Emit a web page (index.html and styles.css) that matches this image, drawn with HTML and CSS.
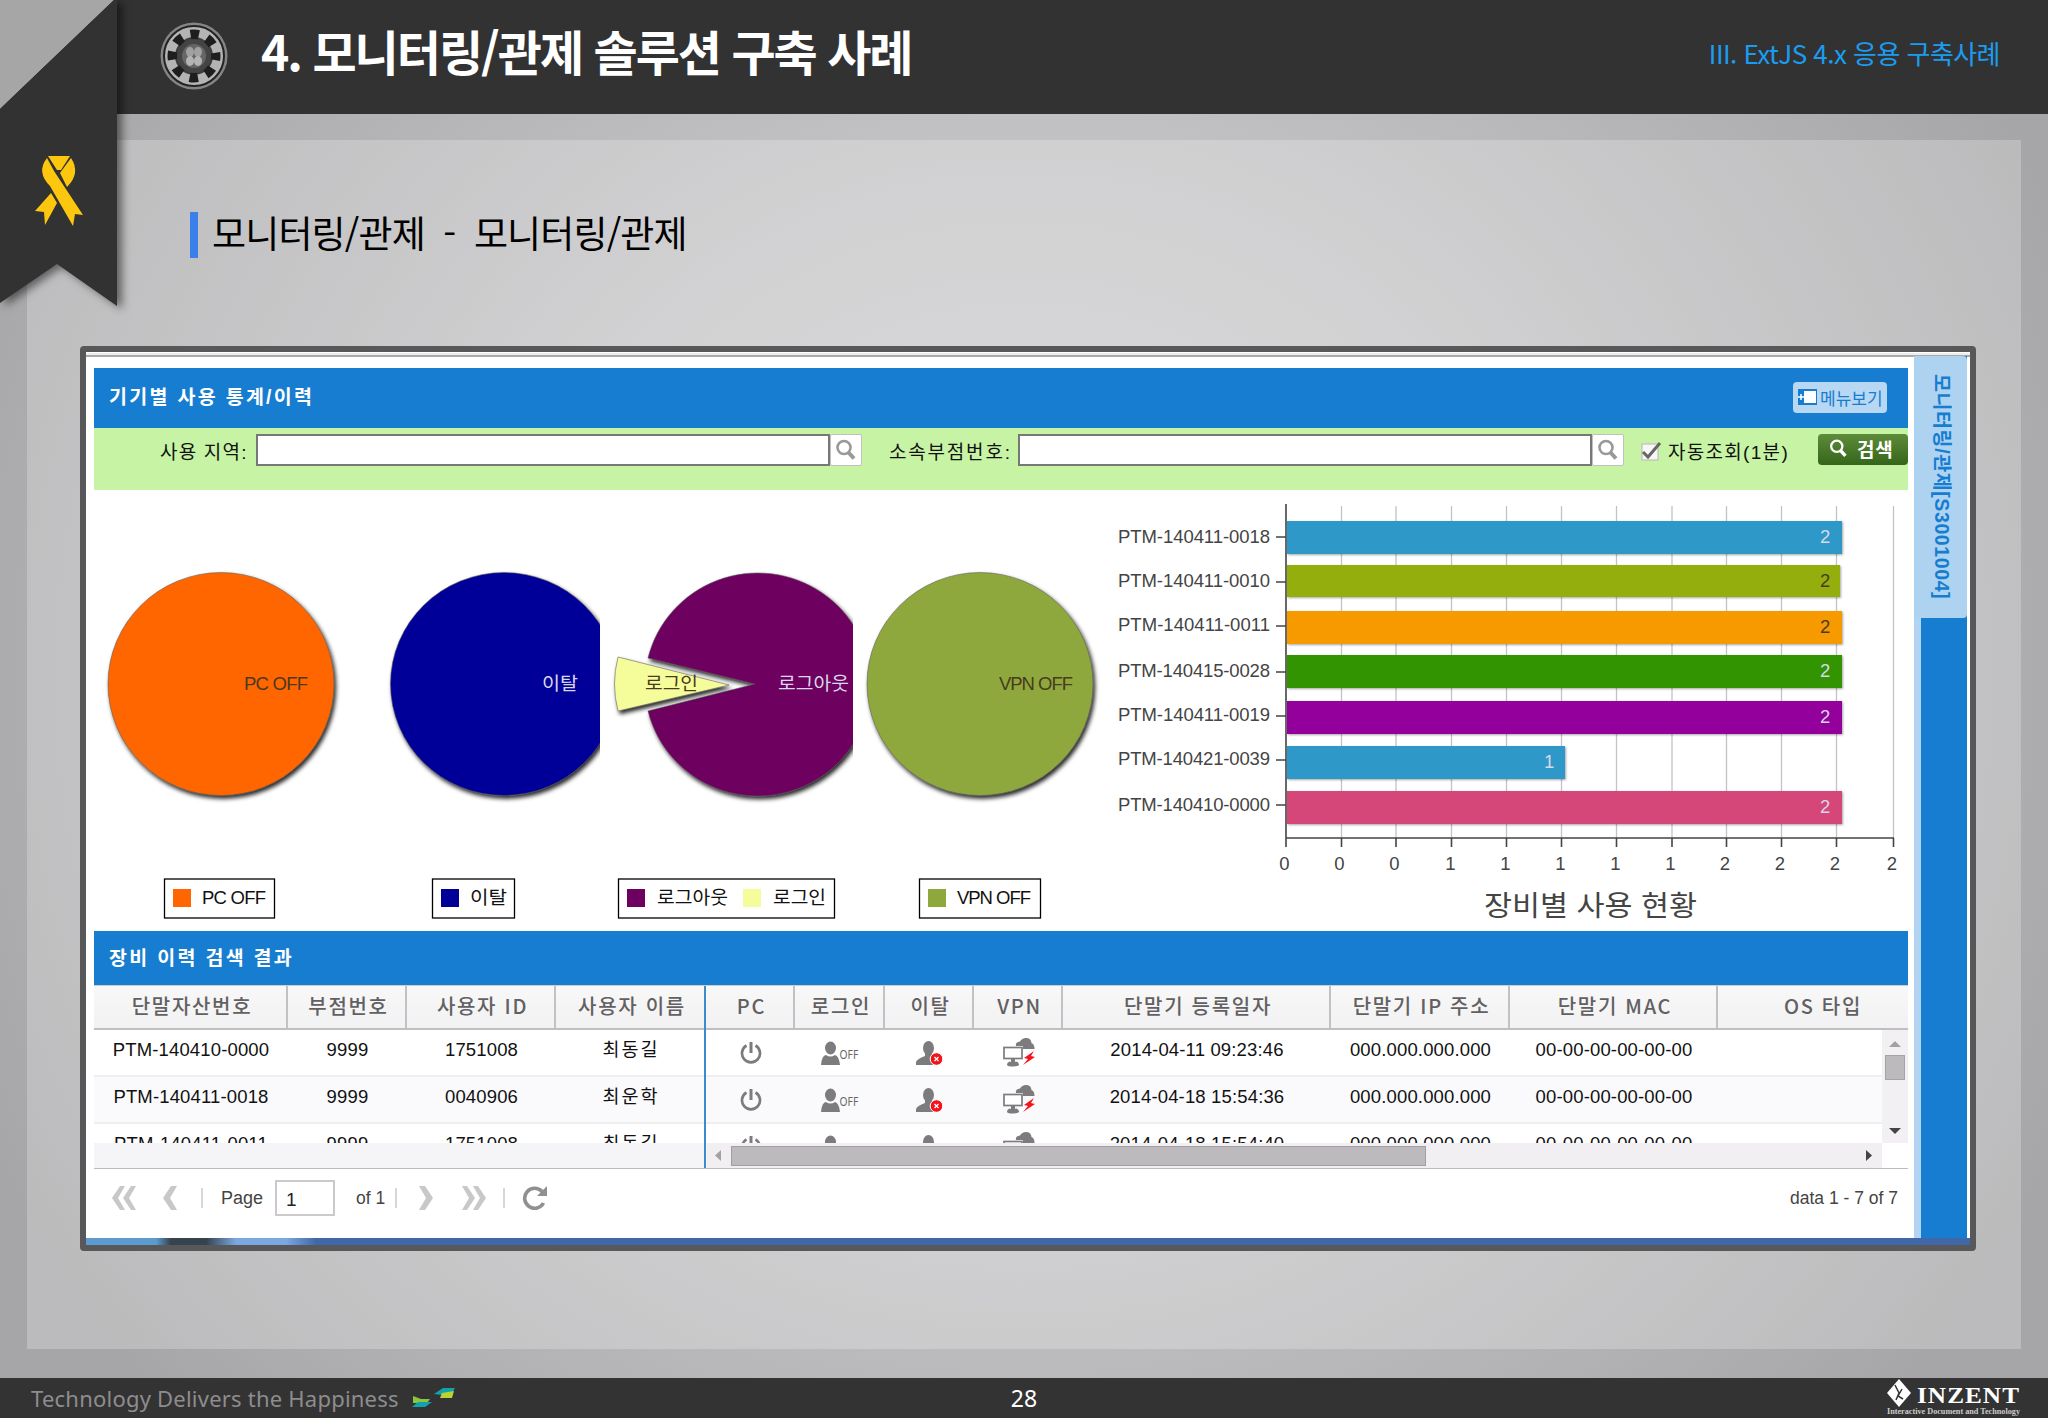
FILE: index.html
```html
<!DOCTYPE html>
<html lang="ko">
<head>
    <meta charset="UTF-8">
    <title>4. 모니터링/관제 솔루션 구축 사례</title>
    <link rel="stylesheet" href="styles.css">
</head>
<body>
    <!-- Shared icons -->
    <svg class="defs" width="0" height="0">
        <defs>
            <filter id="shadow" x="-10%" y="-10%" width="125%" height="125%">
                <feDropShadow dx="2" dy="3" stdDeviation="2.200" flood-color="#000" flood-opacity="0.85"/>
            </filter>
            <filter id="barShadow" x="-2%" y="-10%" width="104%" height="130%">
                <feDropShadow dx="1" dy="1" stdDeviation="1" flood-color="#000" flood-opacity="0.35"/>
            </filter>
            <symbol id="search" viewBox="0 0 22 22">
                <circle cx="9" cy="8.500" r="6.500" fill="none" stroke="currentColor" stroke-width="2.600"/>
                <path d="M13.500 13.500l5.500 6" stroke="currentColor" stroke-width="4"/>
            </symbol>
            <symbol id="power" viewBox="0 0 22 24">
                <path d="M6.500 4.500a9 9 0 1 0 9 0" fill="none" stroke="#7d7b7d" stroke-width="2.700"/>
                <path d="M11 1v11" stroke="#7d7b7d" stroke-width="3"/>
            </symbol>
            <symbol id="user-off" viewBox="0 0 38 24">
                <ellipse cx="9.500" cy="7" rx="5.500" ry="6.500" fill="#7d7b7d"/>
                <path d="M0 24q1-10 5-10q4.500 3 9 0q4 1 5 10z" fill="#7d7b7d"/>
                <text x="18.500" y="17.500" class="off" textLength="19" lengthAdjust="spacingAndGlyphs">OFF</text>
            </symbol>
            <symbol id="user-away" viewBox="0 0 27 24">
                <ellipse cx="12.500" cy="7" rx="5.500" ry="7" fill="#7d7b7d"/>
                <path d="M9 11h7v4l5 3v6H0v-3q1-3 9-6z" fill="#7d7b7d"/>
                <circle cx="20.500" cy="18" r="6.300" fill="#f5131b" stroke="#fff"/>
                <path d="M18.500 16l4 4m0-4l-4 4" stroke="#fff" stroke-width="1.300"/>
            </symbol>
            <symbol id="vpn" viewBox="0 0 32 29">
                <path d="M13 8q-1-4 4-4.500Q19 0 23 0q5 0 5.500 5q3 1 3 6H20V8z" fill="#7d7b7d"/>
                <rect x="1" y="9.500" width="18" height="11" fill="#fff" stroke="#7d7b7d" stroke-width="1.700"/>
                <path d="M10 21v4" stroke="#7d7b7d" stroke-width="4"/>
                <path d="M4 27q0-3 3-3.500q3 2 6 0q3 .500 3 3.500q-1 1.500-6 1.500T4 27z" fill="#7d7b7d"/>
                <path d="M31 13l-10 7 4 1-5 6 12-8-4-1z" fill="#f5131b"/>
            </symbol>
        </defs>
    </svg>

    <header class="slide-header">
        <svg class="emblem" width="70" height="70" viewBox="0 0 70 70">
            <circle cx="35" cy="35" r="33.500" fill="#858585"/>
            <circle cx="35" cy="35" r="30" fill="#b4b4b4" stroke="#222" stroke-width="2"/>
            <circle cx="35" cy="35" r="19" fill="#3c3c3c"/>
            <circle cx="35" cy="35" r="21" fill="none" stroke="#1e1e1e" stroke-width="11" stroke-dasharray="8.250 8.243" stroke-dashoffset="4.100"/>
            <circle cx="35" cy="35" r="17" fill="#444"/>
            <circle cx="35" cy="35" r="12" fill="#666"/>
            <ellipse cx="31" cy="31" rx="4" ry="5" fill="#a0a0a0"/>
            <ellipse cx="39" cy="31" rx="4" ry="5" fill="#a0a0a0"/>
            <ellipse cx="31" cy="40" rx="4" ry="5" fill="#b4b4b4"/>
            <ellipse cx="39" cy="40" rx="4" ry="5" fill="#b4b4b4"/>
        </svg>
        <h1>4. 모니터링/관제 솔루션 구축 사례</h1>
        <span class="chapter">III. ExtJS 4.x 응용 구축사례</span>
    </header>

    <!-- Corner ribbon lies over the header and the panel -->
    <svg class="ribbon" width="135" height="320" viewBox="0 0 135 320">
        <path d="M0 0H114L0 109z" fill="#a6a6a6"/>
        <path d="M114 0h3v306L57 264 0 303V109z" fill="#333233"/>
        <g fill="#fdc70f">
            <path d="M48 156h22l-9 14h-4z"/>
            <path d="M47 158l7 13 29 44-8-1-2 12L50 186q-14-14-3-28z"/>
            <path d="M71 158l-11 15 7 14q14-14 4-29z"/>
            <path d="M51 193l6 10-12 22-1-13-9-1z"/>
        </g>
    </svg>

    <main class="slide">
        <div class="panel">
            <h2>모니터링/관제 <span class="dash">-</span> 모니터링/관제</h2>

            <div class="frame">
                <div class="app">
                    <section class="content">
                        <div class="title-bar">
                            <h3>기기별 사용 통계/이력</h3>
                            <button class="menu-button">
                                <svg width="19" height="16" viewBox="0 0 19 16">
                                    <rect width="19" height="16" fill="#167dd0"/>
                                    <rect x="6" y="2" width="12" height="12" fill="#fff"/>
                                    <path d="M0 8h6M3 5v6" stroke="#fff" stroke-width="1.500"/>
                                </svg>
                                <span>메뉴보기</span>
                            </button>
                        </div>

                        <div class="toolbar">
                            <label class="area-label">사용 지역:</label>
                            <span class="field"></span>
                            <span class="trigger"><svg width="22" height="22"><use href="#search"/></svg></span>
                            <label class="branch-label">소속부점번호:</label>
                            <span class="field"></span>
                            <span class="trigger"><svg width="22" height="22"><use href="#search"/></svg></span>
                            <svg class="check" width="21" height="19" viewBox="0 0 21 19">
                                <rect x="1" y="2" width="16" height="16" fill="#f7f7f7" stroke="#b5b5b5"/>
                                <path d="M2 10l5 5L19 1" fill="none" stroke="#666" stroke-width="3"/>
                            </svg>
                            <label class="auto-label">자동조회(1분)</label>
                            <button class="search-button"><svg width="19" height="19"><use href="#search"/></svg><span>검색</span></button>
                        </div>

                        <div class="charts">
                            <svg width="288" height="441" viewBox="94 490 288 441">
                                <ellipse cx="221" cy="684" rx="113" ry="111.500" fill="#ff6600" class="slice" filter="url(#shadow)"/>
                                <text x="244" y="690" textLength="64" class="dark">PC OFF</text>
                                <rect x="164.500" y="879" width="110" height="39" class="legend"/>
                                <rect x="173" y="889" width="18" height="18" fill="#ff6600"/>
                                <text x="202" y="904" textLength="64">PC OFF</text>
                            </svg>
                            <svg width="218" height="441" viewBox="382 490 218 441">
                                <ellipse cx="504" cy="684" rx="113.500" ry="111.500" fill="#000099" class="slice" filter="url(#shadow)"/>
                                <text x="542" y="690" textLength="36" lengthAdjust="spacingAndGlyphs" class="light">이탈</text>
                                <rect x="432.500" y="879" width="82" height="39" class="legend"/>
                                <rect x="441" y="889" width="18" height="18" fill="#000099"/>
                                <text x="470" y="904" textLength="37" lengthAdjust="spacingAndGlyphs">이탈</text>
                            </svg>
                            <svg width="253" height="441" viewBox="600 490 253 441">
                                <path d="M755 684L648 658A113 111.500 0 1 1 648 711z" fill="#6e0060" class="slice" filter="url(#shadow)"/>
                                <path d="M729 685L618 657Q611 684 618 711z" fill="#f5fd9a" class="slice" filter="url(#shadow)"/>
                                <text x="645" y="690" textLength="53" lengthAdjust="spacingAndGlyphs" class="dark">로그인</text>
                                <text x="778" y="690" textLength="71" lengthAdjust="spacingAndGlyphs" class="light">로그아웃</text>
                                <rect x="618.500" y="879" width="216" height="39" class="legend"/>
                                <rect x="627" y="889" width="18" height="18" fill="#6e0060"/>
                                <text x="657" y="904" textLength="71" lengthAdjust="spacingAndGlyphs">로그아웃</text>
                                <rect x="743" y="889" width="18" height="18" fill="#f5fd9a"/>
                                <text x="773" y="904" textLength="53" lengthAdjust="spacingAndGlyphs">로그인</text>
                            </svg>
                            <svg width="247" height="441" viewBox="853 490 247 441">
                                <ellipse cx="980" cy="684" rx="113" ry="111.500" fill="#8fa83e" class="slice" filter="url(#shadow)"/>
                                <text x="999" y="690" textLength="74" class="dark">VPN OFF</text>
                                <rect x="919.500" y="879" width="121" height="39" class="legend"/>
                                <rect x="928" y="889" width="18" height="18" fill="#8fa83e"/>
                                <text x="957" y="904" textLength="74">VPN OFF</text>
                            </svg>
                            <svg width="808" height="441" viewBox="1100 490 808 441">
                                <path class="gridline" d="M1341.500 506V838M1396 506V838M1451.500 506V838M1506.500 506V838M1561.500 506V838M1616.500 506V838M1672 506V838M1726.500 506V838M1781.500 506V838M1836.500 506V838M1893.500 506V838"/>
                                <g filter="url(#barShadow)">
                                    <rect x="1287" y="521" width="555" height="33" fill="#2f99c9"/>
                                    <rect x="1287" y="565" width="553" height="32" fill="#94ae0a"/>
                                    <rect x="1287" y="611" width="555" height="33" fill="#f79a00"/>
                                    <rect x="1287" y="655" width="555" height="33" fill="#319400"/>
                                    <rect x="1287" y="701" width="555" height="33" fill="#93039c"/>
                                    <rect x="1287" y="746" width="278" height="33" fill="#2f99c9"/>
                                    <rect x="1287" y="791" width="555" height="33" fill="#d54679"/>
                                </g>
                                <path class="axis" d="M1286 504V847M1286 838H1894M1276 537h10M1276 582h10M1276 626h10M1276 672h10M1276 716h10M1276 760h10M1276 805h10M1341.500 838v9M1396 838v9M1451.500 838v9M1506.500 838v9M1561.500 838v9M1616.500 838v9M1672 838v9M1726.500 838v9M1781.500 838v9M1836.500 838v9M1893.500 838v9"/>
                                <g class="names">
                                    <text x="1118" y="543" textLength="152">PTM-140411-0018</text>
                                    <text x="1118" y="587" textLength="152">PTM-140411-0010</text>
                                    <text x="1118" y="631" textLength="152">PTM-140411-0011</text>
                                    <text x="1118" y="677" textLength="152">PTM-140415-0028</text>
                                    <text x="1118" y="721" textLength="152">PTM-140411-0019</text>
                                    <text x="1118" y="765" textLength="152">PTM-140421-0039</text>
                                    <text x="1118" y="811" textLength="152">PTM-140410-0000</text>
                                </g>
                                <g class="values">
                                    <text x="1820" y="543" class="light">2</text>
                                    <text x="1820" y="587" class="dark">2</text>
                                    <text x="1820" y="633" class="dark">2</text>
                                    <text x="1820" y="677" class="light">2</text>
                                    <text x="1820" y="723" class="light">2</text>
                                    <text x="1544" y="768" class="light">1</text>
                                    <text x="1820" y="813" class="light">2</text>
                                </g>
                                <g class="ticks">
                                    <text x="1284.500" y="870">0</text>
                                    <text x="1339.500" y="870">0</text>
                                    <text x="1394.500" y="870">0</text>
                                    <text x="1450.500" y="870">1</text>
                                    <text x="1505.500" y="870">1</text>
                                    <text x="1560.500" y="870">1</text>
                                    <text x="1615.500" y="870">1</text>
                                    <text x="1670.500" y="870">1</text>
                                    <text x="1725" y="870">2</text>
                                    <text x="1780" y="870">2</text>
                                    <text x="1835" y="870">2</text>
                                    <text x="1892" y="870">2</text>
                                </g>
                                <text x="1484" y="916" textLength="213" lengthAdjust="spacingAndGlyphs" class="chart-title">장비별 사용 현황</text>
                            </svg>
                        </div>

                        <div class="title-bar small">
                            <h3>장비 이력 검색 결과</h3>
                        </div>

                        <div class="grid">
                            <div class="row head">
                                <span>단말자산번호</span><span>부점번호</span><span>사용자 ID</span><span>사용자 이름</span>
                                <span>PC</span><span>로그인</span><span>이탈</span><span>VPN</span>
                                <span>단말기 등록일자</span><span>단말기 IP 주소</span><span>단말기 MAC</span><span>OS 타입</span>
                            </div>
                            <div class="body">
                                <div class="rows">
                                    <div class="row">
                                        <span>PTM-140410-0000</span><span>9999</span><span>1751008</span><span class="ko">최동길</span>
                                        <i><svg width="22" height="24"><use href="#power"/></svg></i>
                                        <i><svg width="38" height="24"><use href="#user-off"/></svg></i>
                                        <i><svg width="27" height="24"><use href="#user-away"/></svg></i>
                                        <i><svg width="32" height="29"><use href="#vpn"/></svg></i>
                                        <span>2014-04-11 09:23:46</span><span>000.000.000.000</span><span>00-00-00-00-00-00</span>
                                    </div>
                                    <div class="row">
                                        <span>PTM-140411-0018</span><span>9999</span><span>0040906</span><span class="ko">최운학</span>
                                        <i><svg width="22" height="24"><use href="#power"/></svg></i>
                                        <i><svg width="38" height="24"><use href="#user-off"/></svg></i>
                                        <i><svg width="27" height="24"><use href="#user-away"/></svg></i>
                                        <i><svg width="32" height="29"><use href="#vpn"/></svg></i>
                                        <span>2014-04-18 15:54:36</span><span>000.000.000.000</span><span>00-00-00-00-00-00</span>
                                    </div>
                                    <div class="row">
                                        <span>PTM-140411-0011</span><span>9999</span><span>1751008</span><span class="ko">최동길</span>
                                        <i><svg width="22" height="24"><use href="#power"/></svg></i>
                                        <i><svg width="38" height="24"><use href="#user-off"/></svg></i>
                                        <i><svg width="27" height="24"><use href="#user-away"/></svg></i>
                                        <i><svg width="32" height="29"><use href="#vpn"/></svg></i>
                                        <span>2014-04-18 15:54:40</span><span>000.000.000.000</span><span>00-00-00-00-00-00</span>
                                    </div>
                                </div>
                                <div class="vscroll">
                                    <svg width="12" height="6"><path d="M0 6L6 0l6 6z" fill="#a3a1a3"/></svg>
                                    <b></b>
                                    <svg width="12" height="6"><path d="M0 0h12L6 6z" fill="#444"/></svg>
                                </div>
                            </div>
                            <div class="hscroll">
                                <div class="track">
                                    <svg width="6" height="11"><path d="M6 0v11L0 5.500z" fill="#a3a1a3"/></svg>
                                    <b></b>
                                    <svg width="6" height="11"><path d="M0 0v11l6-5.500z" fill="#444"/></svg>
                                </div>
                            </div>
                            <div class="lock-line"></div>
                        </div>

                        <div class="pager">
                            <svg class="first" width="24" height="24" viewBox="0 0 24 24"><path d="M8 0h5L6 12l7 12H8L0 12zM19 0h5l-7 12 7 12h-5l-8-12z"/></svg>
                            <svg class="prev" width="14" height="24" viewBox="0 0 14 24"><path d="M8 0h6L7 12l7 12H8L0 12z"/></svg>
                            <hr>
                            <span class="page">Page</span>
                            <span class="page-input">1</span>
                            <span class="of">of 1</span>
                            <hr>
                            <svg class="next" width="14" height="24" viewBox="0 0 14 24"><path d="M6 0l8 12-8 12H0l7-12L0 0z"/></svg>
                            <svg class="last" width="24" height="24" viewBox="0 0 24 24"><path d="M5 0l8 12L5 24H0l7-12L0 0zM16 0l8 12-8 12h-5l7-12-7-12z"/></svg>
                            <hr>
                            <svg class="refresh" width="26" height="24" viewBox="0 0 26 24">
                                <path d="M20 5.500A10 10 0 1 0 21.500 17" fill="none" stroke="#918f91" stroke-width="3.600"/>
                                <path d="M25 0v10H15z" fill="#918f91"/>
                            </svg>
                            <span class="total">data 1 - 7 of 7</span>
                        </div>
                    </section>

                    <aside class="side">
                        <div class="tab"><span>모니터링/관제[S3001004]</span></div>
                    </aside>
                </div>
                <div class="taskbar"></div>
            </div>
        </div>
    </main>

    <footer>
        <span class="slogan">Technology Delivers the Happiness</span>
        <svg class="mark" width="44" height="22" viewBox="0 0 44 22">
            <path d="M1 9l8 3h9l-3 4H1z" fill="#8cc63f"/>
            <path d="M0 20l6-5h14l-7 5z" fill="#12a2ae"/>
            <path d="M22 7l9-6h12l-3 5-10 2z" fill="#12a2ae"/>
            <path d="M30 6l12-2-2 7H28z" fill="#b8d433"/>
        </svg>
        <span class="number">28</span>
        <svg class="logo" width="136" height="38" viewBox="0 0 136 38">
            <path d="M13 0l12 14-12 14L1 14z" fill="#fff"/>
            <path d="M9 6l4 8-3 7M16 10l-4 7 5 3" stroke="#343334" stroke-width="1.500" fill="none"/>
            <text x="31" y="24" textLength="103" lengthAdjust="spacingAndGlyphs" class="brand">INZENT</text>
            <text x="1" y="35" textLength="133" lengthAdjust="spacingAndGlyphs" class="tagline">Interactive Document and Technology</text>
        </svg>
    </footer>
</body>
</html>
```
FILE: styles.css
```css
* {
    box-sizing: border-box;
}
body {
    margin: 0;
    width: 2048px;
    height: 1418px;
    overflow: hidden;
    display: flex;
    flex-direction: column;
    position: relative;
    font-family: "Liberation Sans", "Noto Sans CJK KR", sans-serif;
    background: radial-gradient(ellipse 1150px 1100px at 50% 48%, #d2d2d4 0%, #c4c3c5 45%, #a6a5a7 100%);
}
h1, h2, h3 {
    margin: 0;
    white-space: nowrap;
}
svg {
    display: block;
    flex: none;
}
.defs {
    position: absolute;
}

/* Slide header */
.slide-header {
    height: 114px;
    flex: none;
    display: flex;
    align-items: center;
    padding: 0 48px 2px 159px;
    background: #333233;
}
.slide-header h1 {
    margin-left: 32px;
    padding-bottom: 12px;
    color: #fff;
    font: bold 48px/70px "Noto Sans CJK KR", sans-serif;
    letter-spacing: -2px;
}
.chapter {
    margin-left: auto;
    padding-bottom: 6px;
    color: #1a9df0;
    font: 400 26px/40px "Noto Sans CJK KR", sans-serif;
    letter-spacing: -0.55px;
}
.ribbon {
    position: absolute;
    left: 0;
    top: 0;
    filter: drop-shadow(5px 3px 4px rgba(0, 0, 0, 0.5));
}

/* Slide body */
.slide {
    height: 1264px;
    flex: none;
    padding: 26px 27px 29px;
}
.panel {
    height: 1209px;
    padding: 72px 46px 0 53px;
    background: rgba(255, 255, 255, 0.24);
}
.panel h2 {
    height: 46px;
    margin-left: 110px;
    padding-left: 14px;
    border-left: 8px solid #3b80ea;
    color: #000;
    font: 400 37px/41px "Noto Sans CJK KR", sans-serif;
    letter-spacing: -0.85px;
}
.dash {
    margin: 0 9px;
}
.frame {
    width: 1896px;
    height: 905px;
    margin-top: 88px;
    border: 6px solid #58585a;
    border-radius: 4px;
    background: #fff;
}
.app {
    height: 886px;
    display: flex;
    border-top: 1px solid #fff;
    padding-left: 8px;
    padding-right: 2px;
    background: linear-gradient(#eee 0, #eee 2px, #aaa 2px, #aaa 4px, #fff 4px);
}
.content {
    width: 1814px;
    padding-top: 15px;
}
.taskbar {
    height: 7px;
    background: linear-gradient(90deg, #5b9bd0 0, #5b9bd0 70px, #36424c 85px, #36424c 120px, #7ba8e0 150px, #7ba8e0 200px, #4068a8 230px, #4068a8 100%);
}

.title-bar {
    height: 60px;
    display: flex;
    align-items: center;
    justify-content: space-between;
    padding: 0 21px 2px 15px;
    background: #167dd0;
}
.title-bar h3 {
    padding-bottom: 3px;
    color: #fff;
    font-size: 19.5px;
    font-weight: bold;
    letter-spacing: 2.3px;
}
.title-bar.small {
    height: 54px;
    padding-bottom: 0;
}
.menu-button {
    width: 94px;
    height: 31px;
    display: flex;
    align-items: center;
    gap: 3px;
    padding: 0 0 0 5px;
    border: 0;
    border-radius: 4px;
    background: #b7d7f2;
    color: #167dd0;
    font: 17px "Noto Sans CJK KR", sans-serif;
    white-space: nowrap;
}

/* Search toolbar */
.toolbar {
    height: 62px;
    display: flex;
    align-items: flex-start;
    padding-top: 6px;
    background: #c7f4a4;
    color: #111;
    font-size: 19px;
    line-height: 37px;
}
.toolbar label {
    flex: none;
    white-space: nowrap;
}
.area-label {
    width: 96px;
    margin-left: 66px;
    letter-spacing: 1.2px;
}
.branch-label {
    width: 129px;
    margin-left: 27px;
    letter-spacing: 1.8px;
}
.auto-label {
    width: 150px;
    letter-spacing: 1.3px;
}
.field {
    width: 574px;
    height: 32px;
    flex: none;
    border: 2px solid #777;
    background: #fff;
}
.trigger {
    width: 32px;
    height: 32px;
    flex: none;
    display: flex;
    align-items: center;
    justify-content: center;
    border: 1px solid #c0c0c0;
    border-radius: 2px;
    background: #fff;
    color: #999;
}
.check {
    margin: 8px 6px 0 17px;
}
.search-button {
    width: 90px;
    height: 31px;
    display: flex;
    align-items: center;
    gap: 9px;
    padding: 0 0 2px 11px;
    border: 0;
    border-radius: 4px;
    background: linear-gradient(#5d8c3a, #35651a);
    color: #fff;
    font: bold 19px "Noto Sans CJK KR", sans-serif;
    letter-spacing: 0.8px;
    white-space: nowrap;
}

/* Charts */
.charts {
    height: 441px;
    display: flex;
}
.charts text {
    font-size: 18.5px;
    fill: #111;
}
.charts .dark {
    fill: #4a3a20;
}
.charts .light {
    fill: #d8d8e8;
}
.slice {
    stroke: rgba(90, 90, 90, 0.55);
    stroke-width: 1;
}
.legend {
    fill: #fff;
    stroke: #000;
    stroke-width: 1.3;
}
.gridline {
    fill: none;
    stroke: #c3c2c8;
    stroke-width: 1.3;
}
.axis {
    fill: none;
    stroke: #444;
    stroke-width: 1.6;
}
.names text, .ticks text {
    fill: #444;
}
.ticks text {
    text-anchor: middle;
}
.charts .chart-title {
    font-size: 28px;
    fill: #444;
}

/* Result grid */
.grid {
    position: relative;
    width: 1814px;
    height: 184px;
    border-bottom: 1px solid #bdbbbd;
}
.row {
    display: grid;
    grid-template-columns: 194px 119px 149px 150px 89px 90px 89px 89px 268px 179px 208px 208px;
    height: 47px;
    border-bottom: 2px solid #eeedf0;
    font-size: 18.5px;
    line-height: 40px;
    letter-spacing: 0.15px;
    text-align: center;
    white-space: nowrap;
}
.row:nth-child(even) {
    background: #fafafc;
}
.row i {
    display: flex;
    align-items: center;
    justify-content: center;
}
.row .ko {
    letter-spacing: 2px;
}
.head {
    height: 45px;
    overflow: hidden;
    border-top: 1px solid #ccc;
    border-bottom: 2px solid #c0bec0;
    background: linear-gradient(#f8f8f8, #f2f1f3);
    color: #626062;
    font: 500 20px/40px "Noto Sans CJK KR", sans-serif;
    letter-spacing: 1.7px;
}
.head span {
    padding-left: 4px;
    border-right: 2px solid #c3c1c3;
}
.off {
    font: 12px "Noto Sans", sans-serif;
    fill: #666;
}
.body {
    display: flex;
    height: 113px;
    overflow: hidden;
    color: #111;
}
.rows {
    width: 1788px;
    overflow: hidden;
}
.vscroll {
    width: 26px;
    display: flex;
    flex-direction: column;
    align-items: center;
    padding: 11px 0 9px;
    background: #f2f0f2;
}
.vscroll b {
    width: 20px;
    height: 25px;
    margin: 8px 0 auto;
    border: 1px solid #a5a3a5;
    background: #bcbabc;
}
.hscroll {
    height: 25px;
    background: linear-gradient(90deg, #f5f4f6 1788px, #fff 1788px);
}
.track {
    width: 1175px;
    height: 25px;
    display: flex;
    align-items: center;
    margin-left: 613px;
    padding: 0 10px 0 8px;
    background: #f1eff2;
}
.track b {
    width: 695px;
    height: 20px;
    margin: 0 auto 0 10px;
    border: 1px solid #a09ea0;
    background: #bcbabd;
}
.lock-line {
    position: absolute;
    left: 610px;
    top: 1px;
    width: 2px;
    height: 182px;
    background: #3c8ccb;
}

/* Paging bar */
.pager {
    height: 58px;
    display: flex;
    align-items: center;
    padding: 0 10px 0 18px;
    color: #444;
    font-size: 18px;
    fill: #c9c7ca;
}
.pager hr {
    width: 2px;
    height: 20px;
    margin: 0;
    border: 0;
    background: #d9d7da;
}
.prev {
    margin: 0 24px 0 27px;
}
.page {
    width: 54px;
    margin-left: 18px;
}
.page-input {
    width: 60px;
    height: 36px;
    padding-left: 9px;
    border: 2px solid #cbc9cc;
    line-height: 35px;
    font-size: 19px;
    color: #222;
}
.of {
    width: 39px;
    margin-left: 21px;
    font-size: 17.5px;
}
.next {
    margin-left: 22px;
}
.last {
    margin: 0 17px 0 29px;
}
.refresh {
    margin-left: 17px;
}
.total {
    margin-left: auto;
    font-size: 17.5px;
}

/* Right side tab */
.side {
    width: 53px;
    height: 882px;
    margin: 3px 0 0 6px;
    border-left: 7px solid #b3d4f1;
    background: #167dd0;
}
.tab {
    width: 53px;
    height: 262px;
    margin-left: -7px;
    padding-left: 6px;
    display: flex;
    align-items: center;
    justify-content: center;
    border-radius: 0 4px 4px 0;
    background: #add3f0;
}
.tab span {
    writing-mode: vertical-rl;
    text-orientation: sideways;
    white-space: nowrap;
    color: #167dd0;
    font-size: 19.5px;
    font-weight: bold;
    letter-spacing: 0.6px;
}

/* Slide footer */
footer {
    height: 40px;
    display: grid;
    grid-template-columns: 381px 44px 1fr 136px;
    align-items: center;
    padding: 0 26px 0 31px;
    background: #343334;
    font-family: "Noto Sans", sans-serif;
}
.slogan {
    color: #8e8d8e;
    font-size: 22px;
    letter-spacing: 0.22px;
    white-space: nowrap;
}
.number {
    width: 30px;
    margin-left: 553px;
    color: #fff;
    font-size: 23px;
    text-align: center;
}
.brand {
    font: bold 24px "Liberation Serif", serif;
    letter-spacing: 1px;
    fill: #fff;
}
.tagline {
    font: bold 8px "Liberation Serif", serif;
    fill: #ccc;
}
```
